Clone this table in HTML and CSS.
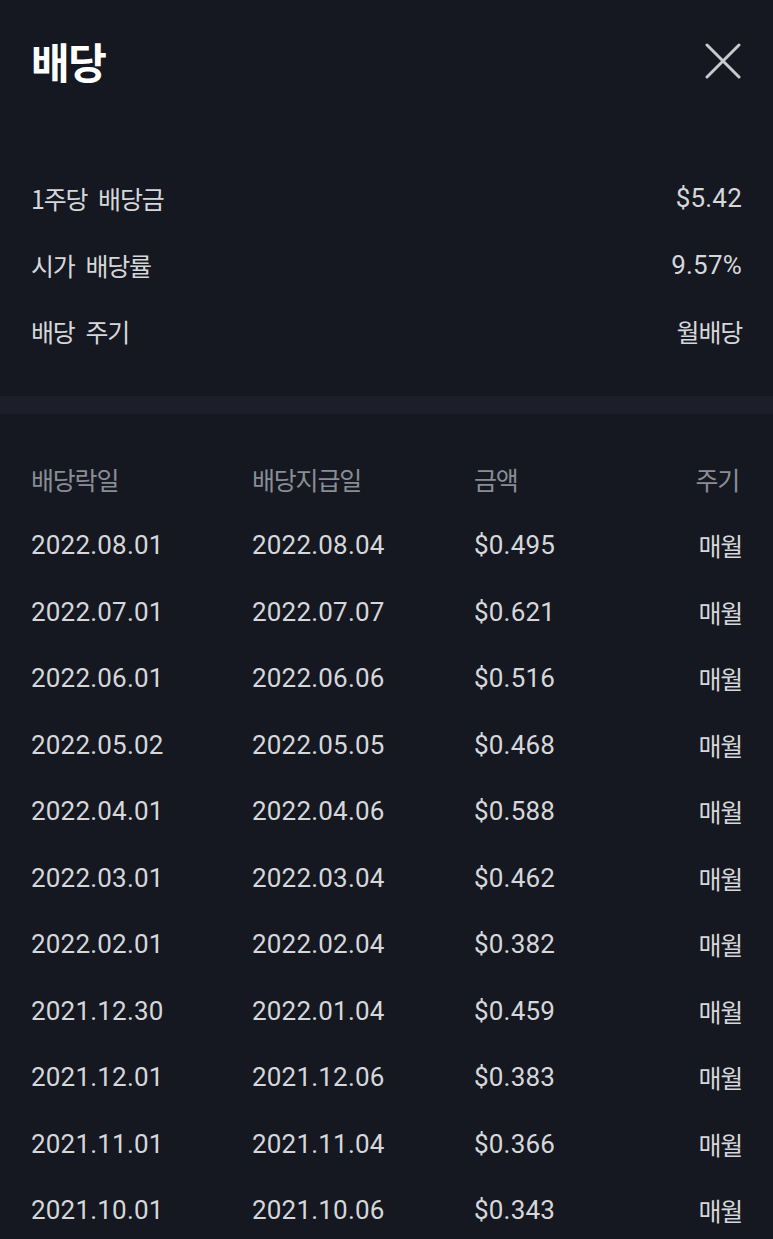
FILE: index.html
```html
<!DOCTYPE html>
<html lang="ko">
<head>
  <meta charset="UTF-8" />
  <meta name="viewport" content="width=device-width, initial-scale=1.0" />
  <title>배당</title>
  <link rel="stylesheet" href="styles.css">
</head>
<body>

<div class="sheet">
  <div class="sheet-header">
    <h1 class="ko">배당</h1>
    <button class="close-btn" aria-label="닫기">
      <svg width="36" height="36" viewBox="0 0 36 36">
        <path d="M2 2 L34 34 M34 2 L2 34" stroke="#c9cacd" stroke-width="3" stroke-linecap="round" fill="none" />
      </svg>
    </button>
  </div>

  <div class="summary">
    <div class="summary-row">
      <span class="ko">1주당 배당금</span>
      <span class="num">$5.42</span>
    </div>
    <div class="summary-row">
      <span class="ko">시가 배당률</span>
      <span class="num">9.57%</span>
    </div>
    <div class="summary-row">
      <span class="ko">배당 주기</span>
      <span class="ko">월배당</span>
    </div>
  </div>

  <div class="divider"></div>

  <div class="history" id="history">
    <div class="history-row head">
      <span class="ko">배당락일</span>
      <span class="ko">배당지급일</span>
      <span class="ko">금액</span>
      <span class="ko right">주기</span>
    </div>
  </div>
</div>

<script>
const rows = [
  ["2022.08.01", "2022.08.04", "$0.495"],
  ["2022.07.01", "2022.07.07", "$0.621"],
  ["2022.06.01", "2022.06.06", "$0.516"],
  ["2022.05.02", "2022.05.05", "$0.468"],
  ["2022.04.01", "2022.04.06", "$0.588"],
  ["2022.03.01", "2022.03.04", "$0.462"],
  ["2022.02.01", "2022.02.04", "$0.382"],
  ["2021.12.30", "2022.01.04", "$0.459"],
  ["2021.12.01", "2021.12.06", "$0.383"],
  ["2021.11.01", "2021.11.04", "$0.366"],
  ["2021.10.01", "2021.10.06", "$0.343"]
];

const history = document.getElementById("history");
rows.forEach(([exDate, payDate, amount]) => {
  const row = document.createElement("div");
  row.className = "history-row";
  row.innerHTML = `<span class="num">${exDate}</span><span class="num">${payDate}</span><span class="num">${amount}</span><span class="ko right">매월</span>`;
  history.appendChild(row);
});
</script>
</body>
</html>
```

FILE: styles.css
```css
body {
  margin: 0;
  padding: 0;
  background-color: #151821;
  color: #d6d7da;
  font-family: Roboto, "Noto Sans CJK KR", sans-serif;
}

.sheet {
  width: 773px;
  min-height: 1239px;
}

.sheet-header {
  height: 122px;
  display: flex;
  justify-content: space-between;
  align-items: center;
  padding: 0 31px 0 31px;
  box-sizing: border-box;
}

.sheet-header h1 {
  margin: 0;
  font-size: 42px;
  font-weight: 700;
  letter-spacing: -1.5px;
  color: #ffffff;
  line-height: 1;
}

.close-btn {
  background: none;
  border: none;
  padding: 0;
  margin-right: 1px;
  width: 36px;
  height: 36px;
  cursor: pointer;
}

.ko {
  font-family: "Noto Sans CJK KR", sans-serif;
  font-size: 25px;
  letter-spacing: -1.2px;
  word-spacing: 5px;
}

.num {
  font-family: Roboto, sans-serif;
  font-size: 26px;
  letter-spacing: 0.2px;
}

.summary {
  padding: 43px 31px 31px 31px;
}

.summary-row {
  height: 66.5px;
  display: flex;
  justify-content: space-between;
  align-items: center;
}

.divider {
  height: 18px;
  background-color: #1c1f29;
}

.history {
  padding: 32px 31px 0 31px;
}

.history-row {
  height: 66.5px;
  display: grid;
  grid-template-columns: 221px 222px 1fr auto;
  align-items: center;
}

.history-row.head {
  color: #8a8d94;
}

.history-row.head .right {
  padding-right: 3px;
}

.right {
  text-align: right;
}
```
